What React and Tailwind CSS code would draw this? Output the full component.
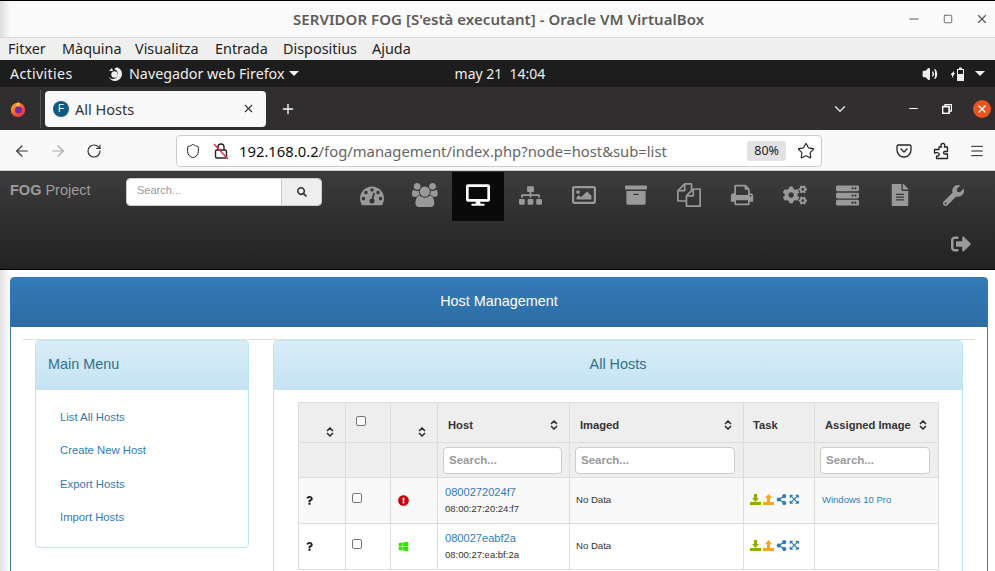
import {
  FaDesktop, FaSitemap, FaRegImage, FaArchive, FaCogs, FaServer,
  FaFileAlt, FaWrench, FaSignOutAlt, FaSearch, FaQuestion, FaExclamationCircle, FaWindows, FaShareAlt, FaExpandArrowsAlt,
} from "react-icons/fa";
import { ArrowLeft, ArrowRight, RotateCw, Shield, Star, Menu, X, Plus, ChevronDown, ChevronsUpDown, Minus, Square, Volume2 } from "lucide-react";

const ui = "font-['Noto_Sans',sans-serif]";
const web = "font-['Liberation_Sans',Arial,sans-serif]";

function FirefoxLogo() {
  return (
    <svg width="16" height="16" viewBox="0 0 18 18">
      <defs>
        <linearGradient id="ffx" x1="0" y1="0" x2="1" y2="1">
          <stop offset="0" stopColor="#ffbd2e" />
          <stop offset="0.5" stopColor="#ff5a36" />
          <stop offset="1" stopColor="#d7265f" />
        </linearGradient>
      </defs>
      <circle cx="9" cy="10" r="8" fill="url(#ffx)" />
      <circle cx="9.5" cy="10" r="3.8" fill="#6a2ca8" />
      <path d="M9 1c2 1 2.5 3 1.5 5L7 5c.5-1.500 1-3 2-4z" fill="#ffc72e" />
    </svg>
  );
}

function GnomeFirefox() {
  return (
    <svg width="16" height="16" viewBox="0 0 16 16" fill="#eee">
      <path d="M8 1a7 7 0 1 1-6.800 8.600c.6 2 2.500 3.400 4.800 3.400a5 5 0 0 0 1.200-9.800L9.500 1.200 8 1z" />
      <circle cx="7.500" cy="8.500" r="3.200" />
      <path d="M2 5l3-3 1 3z" />
    </svg>
  );
}

function Pocket() {
  return (
    <svg width="16" height="16" viewBox="0 0 16 16" fill="none" stroke="#222" strokeWidth="1.300">
      <path d="M2.500 2h11A1.500 1.500 0 0 1 15 3.500V7a7 7 0 0 1-14 0V3.500A1.500 1.500 0 0 1 2.500 2z" />
      <path d="M5 6l3 3 3-3" strokeLinecap="round" strokeLinejoin="round" />
    </svg>
  );
}

function PuzzlePiece() {
  return (
    <svg width="16" height="18" viewBox="0 0 16 18" fill="none" stroke="#222" strokeWidth="1.300" strokeLinejoin="round">
      <path d="M6 5h2.500c-.8-1-1-3 1-3.500 2-.3 3 1.800 1.800 3.500H14.500v4.500h-3c-1.200 0-1.200 2.500 0 2.500h3V16.500H3.500v-2.500c1.200.5 2.800-.2 2.700-1.700C6.200 10.800 4.500 10.300 1.500 11V7.500H6z" />
    </svg>
  );
}

function RestoreIcon() {
  return (
    <svg width="10" height="10" viewBox="0 0 10 10" fill="none" stroke="#fff" strokeWidth="1.200">
      <rect x="0.600" y="2.600" width="6.500" height="6.800" strokeWidth="1.600" />
      <path d="M3 2.500V.6h6.400v6.500H7.500" />
    </svg>
  );
}

function InsecureLock() {
  return (
    <svg width="16" height="18" viewBox="0 0 16 18" fill="none" stroke="#222" strokeWidth="1.400">
      <rect x="2.500" y="8" width="11" height="8" rx="1.500" />
      <path d="M5 8V5a3 3 0 0 1 6 0v3" />
      <path d="M1 2l14 15" stroke="#e22850" />
    </svg>
  );
}

function Battery() {
  return (
    <svg width="16" height="16" viewBox="0 0 16 16" fill="#eee">
      <path d="M1 8l3-3v2h1L2 12V9H1z" />
      <path d="M7 3h2V1.500h3V3h2v12H7zm1 1v10h5V4z" />
      <rect x="8" y="8" width="5" height="6" />
    </svg>
  );
}

function TrayDown({ color, up }) {
  return (
    <svg width="11" height="11" viewBox="0 0 11 11" fill={color}>
      <rect x="0" y="8" width="11" height="3" />
      {up ? <path d="M5.500 0L9 4H7v4H4V4H2z" /> : <path d="M4 0h3v4h2L5.500 8 2 4h2z" />}
    </svg>
  );
}

// Font Awesome 4 shapes that the react-icons set no longer has
function Fa4({ d, w = 1792, h = 1792, size = 24 }) {
  return (
    <svg width={(size * w) / 1792} height={size} viewBox={`0 0 ${w} ${h}`} fill="currentColor">
      <path d={d} />
    </svg>
  );
}

const tachometer = "M384 1152q0-53-37.500-90.500t-90.500-37.500-90.500 37.500-37.500 90.500 37.500 90.500 90.500 37.500 90.500-37.500 37.500-90.500zm192-448q0-53-37.500-90.500t-90.500-37.500-90.500 37.500-37.500 90.500 37.500 90.500 90.500 37.500 90.500-37.500 37.500-90.500zm428 481l101-382q6-26-7.500-48.500t-38.500-29.500-48 6.500-30 39.500l-101 382q-60 5-107 43.500t-63 98.500q-20 77 20 146t117 89 146-20 89-117q16-60-6-117t-72-91zm660-33q0-53-37.500-90.500t-90.500-37.500-90.500 37.500-37.500 90.500 37.500 90.500 90.500 37.500 90.500-37.500 37.500-90.500zm-640-640q0-53-37.500-90.500t-90.500-37.500-90.500 37.500-37.500 90.500 37.500 90.500 90.500 37.500 90.500-37.500 37.500-90.500zm448 192q0-53-37.500-90.500t-90.500-37.500-90.500 37.500-37.500 90.500 37.500 90.500 90.500 37.500 90.500-37.500 37.500-90.500zm320 448q0 261-141 483-19 29-54 29h-1402q-35 0-54-29-141-221-141-483 0-182 71-348t191-286 286-191 348-71 348 71 286 191 191 286 71 348z";
const users = "M593 896q-162 5-265 128h-134q-82 0-138-40.500t-56-118.500q0-353 124-353 6 0 43.500 21t97.500 42.500 119 21.500q67 0 133-23-5 37-5 66 0 139 81 256zm1071 637q0 120-73 189.500t-194 69.500h-874q-121 0-194-69.500t-73-189.500q0-53 3.500-103.500t14-109 26.500-108.500 43-97.500 62-81 85.500-53.500 111.500-20q10 0 43 21.500t73 48 107 48 135 21.500 135-21.500 107-48 73-48 43-21.500q61 0 111.500 20t85.500 53.500 62 81 43 97.500 26.500 108.500 14 109 3.500 103.500zm-1024-1277q0 106-75 181t-181 75-181-75-75-181 75-181 181-75 181 75 75 181zm704 384q0 159-112.500 271.500t-271.500 112.500-271.500-112.500-112.500-271.500 112.500-271.500 271.500-112.500 271.500 112.500 112.500 271.500zm576 225q0 78-56 118.500t-138 40.500h-134q-103-123-265-128 81-117 81-256 0-29-5-66 66 23 133 23 59 0 119-21.500t97.500-42.500 43.500-21q124 0 124 353zm-128-609q0 106-75 181t-181 75-181-75-75-181 75-181 181-75 181 75 75 181z";
const files = "M1696 384q40 0 68 28t28 68v1216q0 40-28 68t-68 28h-960q-40 0-68-28t-28-68v-288h-544q-40 0-68-28t-28-68v-672q0-40 20-88t48-76l408-408q28-28 76-48t88-20h416q40 0 68 28t28 68v328q68-40 128-40h416zm-544 213l-299 299h299v-299zm-640-384l-299 299h299v-299zm196 647l316-316v-416h-384v416q0 40-28 68t-68 28h-416v640h512v-256q0-40 20-88t48-76zm956 804v-1152h-384v416q0 40-28 68t-68 28h-416v640h896z";
const printer = "M448 1536h896v-256h-896v256zm0-640h896v-384h-160q-40 0-68-28t-28-68v-160h-640v640zm1152 64q0-26-19-45t-45-19-45 19-19 45 19 45 45 19 45-19 19-45zm128 0v416q0 13-9.500 22.500t-22.500 9.500h-224v160q0 40-28 68t-68 28h-960q-40 0-68-28t-28-68v-160h-224q-13 0-22.500-9.500t-9.500-22.500v-416q0-79 56.500-135.500t135.500-56.500h64v-544q0-40 28-68t68-28h672q40 0 88 20t76 48l152 152q28 28 48 76t20 88v256h64q79 0 135.500 56.500t56.500 135.500z";

const navIcons = [
  <Fa4 d={tachometer} size={24} />,
  <Fa4 d={users} w={1920} size={24} />,
  <FaDesktop className="text-[24px]" />,
  <FaSitemap className="text-[23px]" />,
  <FaRegImage className="text-[24px]" />,
  <FaArchive className="text-[22px]" />,
  <Fa4 d={files} size={24} />,
  <Fa4 d={printer} size={24} />,
  <FaCogs className="text-[24px]" />,
  <FaServer className="text-[23px]" />,
  <FaFileAlt className="text-[22px]" />,
  <FaWrench className="text-[21px]" />,
];

function Sort() {
  return <ChevronsUpDown size={12} strokeWidth={3.500} className="shrink-0 text-[#333]" />;
}

function SearchInput() {
  return (
    <input
      readOnly
      placeholder="Search..."
      className="block h-[27px] w-full rounded-[4px] border border-[#ccc] bg-white px-[5px] text-[11.500px] font-bold text-[#555] placeholder:text-[#999]"
    />
  );
}

function HostRow({ name, mac, striped, icon, image }) {
  const td = "border border-[#ddd] align-middle";
  return (
    <tr className={`h-[46px] ${striped ? "bg-[#f9f9f9]" : "bg-white"}`}>
      <td className={`${td} pl-[6px]`}><FaQuestion className="mb-[1px] text-[9px] text-[#222]" /></td>
      <td className={`${td} pl-[6px]`}><input type="checkbox" readOnly className="mb-[5px] block h-[10px] w-[10px] appearance-none rounded-[2px] border border-[#767676] bg-white" /></td>
      <td className={`${td} pl-[7px]`}><div className="mb-[1px]">{icon}</div></td>
      <td className={`${td} pl-[7px]`}>
        <div className="mb-[1px]">
          <div className="text-[11.100px] leading-[13px] text-[#337ab7]">{name}</div>
          <div className="mt-[4px] text-[9.500px] leading-[12px] text-[#333]">{mac}</div>
        </div>
      </td>
      <td className={`${td} pl-[6px] text-[9.600px] text-[#333]`}>No Data</td>
      <td className={`${td} pl-[6px]`}>
        <div className="mb-[2px] flex items-center gap-[2px]">
          <TrayDown color="#8fae00" />
          <TrayDown color="#fda41c" up />
          <FaShareAlt className="text-[11px] text-[#337ab7]" />
          <FaExpandArrowsAlt className="text-[10.500px] text-[#337ab7]" />
        </div>
      </td>
      <td className={`${td} pl-[7px] text-[9.500px] text-[#337ab7]`}>{image}</td>
    </tr>
  );
}

export default function App() {
  const th = "border border-[#ddd] bg-[#eee]";
  return (
    <div className="flex h-[571px] w-[995px] flex-col overflow-hidden bg-white">
      {/* VirtualBox window */}
      <div className={`flex h-[38px] shrink-0 items-center border-t border-t-black border-b border-b-[#d8d8d8] bg-[linear-gradient(to_right,#dcdcdc,#fafafa_10px)] ${ui}`}>
        <div className="flex-1 pl-[293px] text-[15px] font-semibold tracking-[0.05px] whitespace-nowrap text-[#5e5c5a]">SERVIDOR FOG [S'està executant] - Oracle VM VirtualBox</div>
        <div className="flex items-center gap-[20px] pr-[6px] text-[#555]">
          <Minus size={14} />
          <Square size={10} className="mx-[2px]" />
          <X size={14} />
        </div>
      </div>
      <div className={`flex h-[22px] shrink-0 items-center bg-[#efefef] pl-[8px] text-[14.400px] text-[#222] ${ui}`}>
        <span className="w-[54px]">Fitxer</span>
        <span className="w-[73px]">Màquina</span>
        <span className="w-[80px]">Visualitza</span>
        <span className="w-[68px]">Entrada</span>
        <span className="w-[89px]">Dispositius</span>
        <span>Ajuda</span>
      </div>

      {/* GNOME top bar */}
      <div className={`flex h-[27px] shrink-0 items-center bg-[#1d1d1d] pl-[10px] pr-[10px] text-[14.300px] text-[#eee] ${ui}`}>
        <span className="w-[97px] tracking-[0.3px]">Activities</span>
        <GnomeFirefox />
        <span className="ml-[6px]">Navegador web Firefox</span>
        <span className="ml-[4px] h-0 w-0 border-x-[5px] border-t-[5px] border-x-transparent border-t-[#eee]" />
        <span className="ml-[156px] text-[14px] whitespace-nowrap">may 21&nbsp;&nbsp;14:04</span>
        <div className="ml-auto flex items-center">
          <Volume2 size={16} fill="#eee" />
          <span className="ml-[12px]"><Battery /></span>
          <span className="ml-[9px] h-0 w-0 border-x-[5px] border-t-[5px] border-x-transparent border-t-[#eee]" />
        </div>
      </div>

      {/* Firefox tab strip */}
      <div className={`flex h-[43px] shrink-0 items-center bg-[#302e2f] ${ui}`}>
        <div className="flex h-[38px] w-[41px] shrink-0 items-center justify-center border-r border-[#555] pr-[5px]">
          <FirefoxLogo />
        </div>
        <div className="ml-[4px] flex h-[36px] w-[221px] shrink-0 items-center rounded-[4px] bg-[#f9f9fa] pl-[8px] pr-[11px] text-[14.500px] text-[#333]">
          <span className={`flex h-[16px] w-[16px] items-center justify-center rounded-full bg-[#0f5a7f] text-[10px] text-white ${web}`}>F</span>
          <span className="ml-[6px] flex-1 pt-[2px]">All Hosts</span>
          <X size={13} />
        </div>
        <Plus size={16} className="ml-[14px] shrink-0 text-white" />
        <ChevronDown size={18} className="ml-[535px] shrink-0 text-[#ddd]" />
        <Minus size={13} className="ml-[58px] shrink-0 text-white" />
        <span className="ml-[22px]"><RestoreIcon /></span>
        <span className="ml-[21px] flex h-[18px] w-[18px] shrink-0 items-center justify-center rounded-full bg-[#e95420]">
          <X size={12} strokeWidth={2.500} className="text-white" />
        </span>
      </div>

      {/* Firefox nav bar */}
      <div className={`flex h-[41px] shrink-0 items-center border-b border-[#ccc] bg-[#f9f9fa] pt-[2px] ${ui}`}>
        <ArrowLeft size={18} className="ml-[13px] text-[#333]" strokeWidth={1.500} />
        <ArrowRight size={18} className="ml-[18px] text-[#aaa]" strokeWidth={1.500} />
        <RotateCw size={16} className="ml-[19px] text-[#333]" strokeWidth={1.700} />
        <div className="ml-[74px] flex h-[32px] w-[646px] items-center rounded-[4px] border border-[#ccc] bg-white pl-[8px] pr-[6px]">
          <Shield size={16} className="text-[#222]" strokeWidth={1.500} />
          <span className="ml-[12px]"><InsecureLock /></span>
          <span className="ml-[10px] flex-1 text-[14.800px] whitespace-nowrap text-[#666]"><span className="text-[#111]">192.168.0.2</span>/fog/management/index.php?node=host&amp;sub=list</span>
          <span className="rounded-[3px] bg-[#e2e2e2] px-[7px] py-[1px] text-[12.500px] text-[#222]">80%</span>
          <Star size={18} className="ml-[11px] text-[#222]" strokeWidth={1.500} />
        </div>
        <span className="ml-[74px]"><Pocket /></span>
        <span className="ml-[21px]"><PuzzlePiece /></span>
        <Menu size={16} className="ml-[20px] text-[#222]" strokeWidth={1.500} />
      </div>

      {/* FOG navbar */}
      <div className={`flex h-[99px] shrink-0 border-b border-black bg-[linear-gradient(to_bottom,#3c3c3c,#222)] ${web}`}>
        <div className="w-[126px] shrink-0 pl-[10px] pt-[10px] text-[14.500px] leading-[18px] text-[#9d9d9d]"><b>FOG</b> Project</div>
        <div className="mt-[7px] flex h-[28px] w-[196px] shrink-0 rounded-[4px] border border-[#ccc]">
          <div className="flex-1 rounded-l-[3px] bg-white pl-[10px] text-[11px] leading-[22px] text-[#999]">Search...</div>
          <div className="flex w-[40px] items-center justify-center rounded-r-[3px] border-l border-[#ccc] bg-[#eee]">
            <FaSearch className="text-[10px] text-[#333]" />
          </div>
        </div>
        <div className="ml-[24px] mt-[1px] flex flex-1 flex-wrap content-start pr-[15px]">
          {navIcons.map((icon, i) => (
            <div key={i} className={`flex h-[49px] w-[52.800px] items-center justify-center pb-[3px] ${i === 2 ? "bg-[#0a0a0a] text-white" : "text-[#999]"}`}>
              {icon}
            </div>
          ))}
          <div className="ml-auto mr-[-7px] flex h-[46px] w-[52.800px] items-center justify-center text-[#999]">
            <FaSignOutAlt className="text-[20px]" />
          </div>
        </div>
      </div>

      {/* Page content */}
      <div className={`flex-1 bg-[linear-gradient(to_right,#e0e0e0,#fff_10px)] pl-[10px] pr-[7px] pt-[7px] ${web}`}>
        <div className="h-full rounded-t-[4px] border border-[#337ab7]">
          <div className="flex h-[49px] items-center justify-center bg-[linear-gradient(to_bottom,#337ab7,#2e6da4)] pb-[2px] text-[14.400px] text-white">Host Management</div>
          <div className="mx-[12px] mt-[12px] border-t border-[#e0e0e0]">
            <div className="flex items-start px-[12px]">
              {/* Main Menu */}
              <div className="h-[208px] w-[214px] shrink-0 rounded-[4px] border border-[#bce8f1]">
                <div className="flex h-[49px] items-center bg-[linear-gradient(to_bottom,#d9edf7,#c4e3f3)] pb-[2px] pl-[12px] text-[14.400px] text-[#31708f]">Main Menu</div>
                <div className="flex flex-col gap-[20px] pl-[24px] pt-[21px] text-[11.300px] leading-[13.400px] text-[#337ab7]">
                  <span>List All Hosts</span>
                  <span>Create New Host</span>
                  <span>Export Hosts</span>
                  <span>Import Hosts</span>
                </div>
              </div>

              {/* All Hosts */}
              <div className="ml-[24px] h-[300px] w-[690px] shrink-0 rounded-t-[4px] border border-[#bce8f1]">
                <div className="flex h-[49px] items-center justify-center bg-[linear-gradient(to_bottom,#d9edf7,#c4e3f3)] pb-[2px] text-[14.400px] text-[#31708f]">All Hosts</div>
                <div className="px-[24px] pt-[12px]">
                  <table className="w-[640px] table-fixed border-collapse">
                    <colgroup>
                      <col className="w-[47px]" />
                      <col className="w-[45px]" />
                      <col className="w-[47px]" />
                      <col className="w-[132px]" />
                      <col className="w-[174px]" />
                      <col className="w-[71px]" />
                      <col className="w-[124px]" />
                    </colgroup>
                    <thead>
                      <tr className="h-[40px] text-[11.200px] font-bold text-[#333]">
                        <th className={`${th} align-bottom`}><div className="flex justify-end pb-[4px] pr-[9px]"><Sort /></div></th>
                        <th className={`${th} align-top`}><input type="checkbox" readOnly className="ml-[10px] mt-[13px] block h-[10px] w-[10px] appearance-none rounded-[2px] border border-[#767676] bg-white" /></th>
                        <th className={`${th} align-bottom`}><div className="flex justify-end pb-[4px] pr-[9px]"><Sort /></div></th>
                        <th className={th}><div className="flex items-center justify-between pl-[10px] pr-[9px] pt-[5px]">Host<Sort /></div></th>
                        <th className={th}><div className="flex items-center justify-between pl-[10px] pr-[9px] pt-[5px]">Imaged<Sort /></div></th>
                        <th className={`${th} pl-[9px] pt-[5px] text-left`}>Task</th>
                        <th className={th}><div className="flex items-center justify-between pl-[10px] pr-[9px] pt-[5px] whitespace-nowrap">Assigned Image<Sort /></div></th>
                      </tr>
                      <tr className="h-[35px]">
                        <th className={th} />
                        <th className={th} />
                        <th className={th} />
                        <th className={`${th} pl-[5px] pr-[7px]`}><SearchInput /></th>
                        <th className={`${th} pl-[5px] pr-[8px]`}><SearchInput /></th>
                        <th className={th} />
                        <th className={`${th} pl-[5px] pr-[8px]`}><SearchInput /></th>
                      </tr>
                    </thead>
                    <tbody>
                      <HostRow striped name="0800272024f7" mac="08:00:27:20:24:f7" image="Windows 10 Pro" icon={<FaExclamationCircle className="text-[11px] text-[#c9000a]" />} />
                      <HostRow name="080027eabf2a" mac="08:00:27:ea:bf:2a" image="" icon={<FaWindows className="text-[11px] text-[#2fe800]" />} />
                    </tbody>
                  </table>
                </div>
              </div>
            </div>
          </div>
        </div>
      </div>
    </div>
  );
}
